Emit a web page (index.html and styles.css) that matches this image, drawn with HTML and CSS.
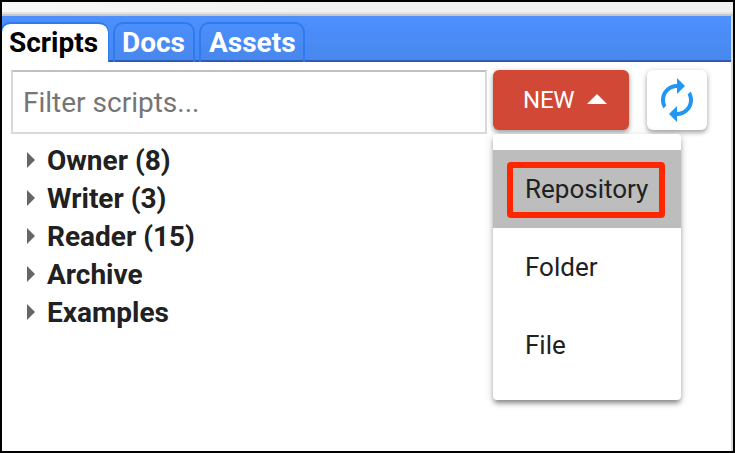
FILE: index.html
```html
<!DOCTYPE html>
<html lang="en">
<head>
<meta charset="utf-8">
<title>Scripts</title>
<link rel="stylesheet" href="styles.css">
</head>
<body>
<div class="window">
  <div class="topbar"></div>
  <div class="panel">
    <nav class="tabs">
      <a class="tab active"><span>Scripts</span></a>
      <a class="tab docs"><span>Docs</span></a>
      <a class="tab assets"><span>Assets</span></a>
    </nav>
    <div class="tools">
      <input class="filter" type="text" placeholder="Filter scripts...">
      <div class="new-wrap">
        <button class="new">NEW<i class="caret"></i></button>
        <div class="menu">
          <div class="option selected"><span>Repository</span><div class="highlight"></div></div>
          <div class="option"><span>Folder</span></div>
          <div class="option"><span>File</span></div>
        </div>
      </div>
      <button class="refresh" aria-label="Refresh">
        <svg width="48" height="48" viewBox="0 0 24 24"><path fill="#2196f3" d="M12 6v3l4-4-4-4v3c-4.42 0-8 3.58-8 8 0 1.57.46 3.03 1.24 4.26L6.7 14.8c-.45-.83-.7-1.79-.7-2.8 0-3.31 2.69-6 6-6zm6.76 1.74L17.3 9.2c.44.84.7 1.79.7 2.8 0 3.31-2.69 6-6 6v-3l-4 4 4 4v-3c4.42 0 8-3.58 8-8 0-1.57-.46-3.03-1.24-4.26z"/></svg>
      </button>
    </div>
    <ul class="tree">
      <li><span>Owner (8)</span></li>
      <li><span>Writer (3)</span></li>
      <li><span>Reader (15)</span></li>
      <li><span>Archive</span></li>
      <li><span>Examples</span></li>
    </ul>
  </div>
</div>
</body>
</html>
```
FILE: styles.css
```css
* { box-sizing: border-box; }
body { margin: 0; font-family: Roboto, sans-serif; color: #212121; }
.window {
  display: flex;
  flex-direction: column;
  width: 735px;
  height: 453px;
  border: 2px solid #000;
  background: #fff;
  overflow: hidden;
}
.topbar {
  flex: none;
  height: 14px;
  background: linear-gradient(#e4e4e4, #e4e4e4) 0 10px / 100% 2px no-repeat,
    linear-gradient(90deg, #f7f7f7, #efefef 50%);
  border-bottom: 2px solid #c8c8c8;
}
.panel { flex: 1; border-right: 2px solid #d8d8d8; }
.tabs {
  display: flex;
  height: 46px;
  padding-top: 6px;
  background: linear-gradient(#4d90fe, #4787ed);
  box-shadow: inset 0 -2px #2f5bb7;
}
.tab {
  height: 40px;
  border: 2px solid #2f7aee;
  border-bottom: 0;
  border-radius: 10px 10px 0 0;
  color: #fff;
  font-size: 28px;
  font-weight: 700;
  line-height: 37px;
  white-space: nowrap;
}
.tab.active {
  width: 109px;
  margin-left: -2px;
  padding-left: 7px;
  border-right-width: 1px;
  background: #fff;
  background-clip: padding-box;
  color: #000;
}
.tab.docs { width: 82px; margin-left: 4px; padding-left: 7px; }
.tab.assets { width: 106px; margin-left: 4px; padding-left: 8px; }
.tools { display: flex; padding: 8px 0 0 9px; height: 72px; }
.filter {
  width: 476px;
  height: 64px;
  padding: 0 10px;
  border: 2px solid #d9d9d9;
  border-top-color: #c0c0c0;
  font: 28px Roboto, sans-serif;
  outline: 0;
}
.filter::placeholder { color: #757575; }
.new-wrap { position: relative; margin-left: 6px; }
.new, .refresh {
  display: flex;
  align-items: center;
  height: 60px;
  border: 0;
  border-radius: 6px;
  box-shadow: 0 3px 4px rgba(0,0,0,.24), 0 1px 6px rgba(0,0,0,.18);
}
.new {
  width: 136px;
  padding: 0 0 0 30px;
  background: #d14836;
  color: #fff;
  font: 24px Roboto, sans-serif;
  letter-spacing: -.2px;
}
.caret {
  margin: 0 0 2px 13px;
  border: 10px solid transparent;
  border-top: 0;
  border-bottom-color: #fff;
}
.refresh { width: 60px; margin-left: 18px; padding: 0 6px; background: #fff; }
.refresh svg { flex: none; }
.menu {
  position: absolute;
  top: 64px;
  left: 0;
  width: 188px;
  height: 266px;
  padding-top: 16px;
  border-radius: 4px;
  background: #fff;
  box-shadow: 0 4px 5px -1px rgba(0,0,0,.4), 0 2px 10px rgba(0,0,0,.16);
}
.option {
  position: relative;
  height: 78px;
  padding-left: 32px;
  font-size: 26px;
  line-height: 78px;
}
.selected { background: #bdbdbd; }
.highlight {
  position: absolute;
  top: 12px;
  left: 14px;
  width: 158px;
  height: 56px;
  border: 6px solid #ff2600;
  border-radius: 4px;
}
.tree { margin: 0; padding: 7px 0 0 25px; list-style: none; }
.tree li {
  display: flex;
  align-items: center;
  height: 38px;
  font-size: 28px;
  font-weight: 700;
}
.tree li::before {
  content: "";
  margin-right: 12px;
  border: 8px solid transparent;
  border-right: 0;
  border-left-color: #666;
}
```
